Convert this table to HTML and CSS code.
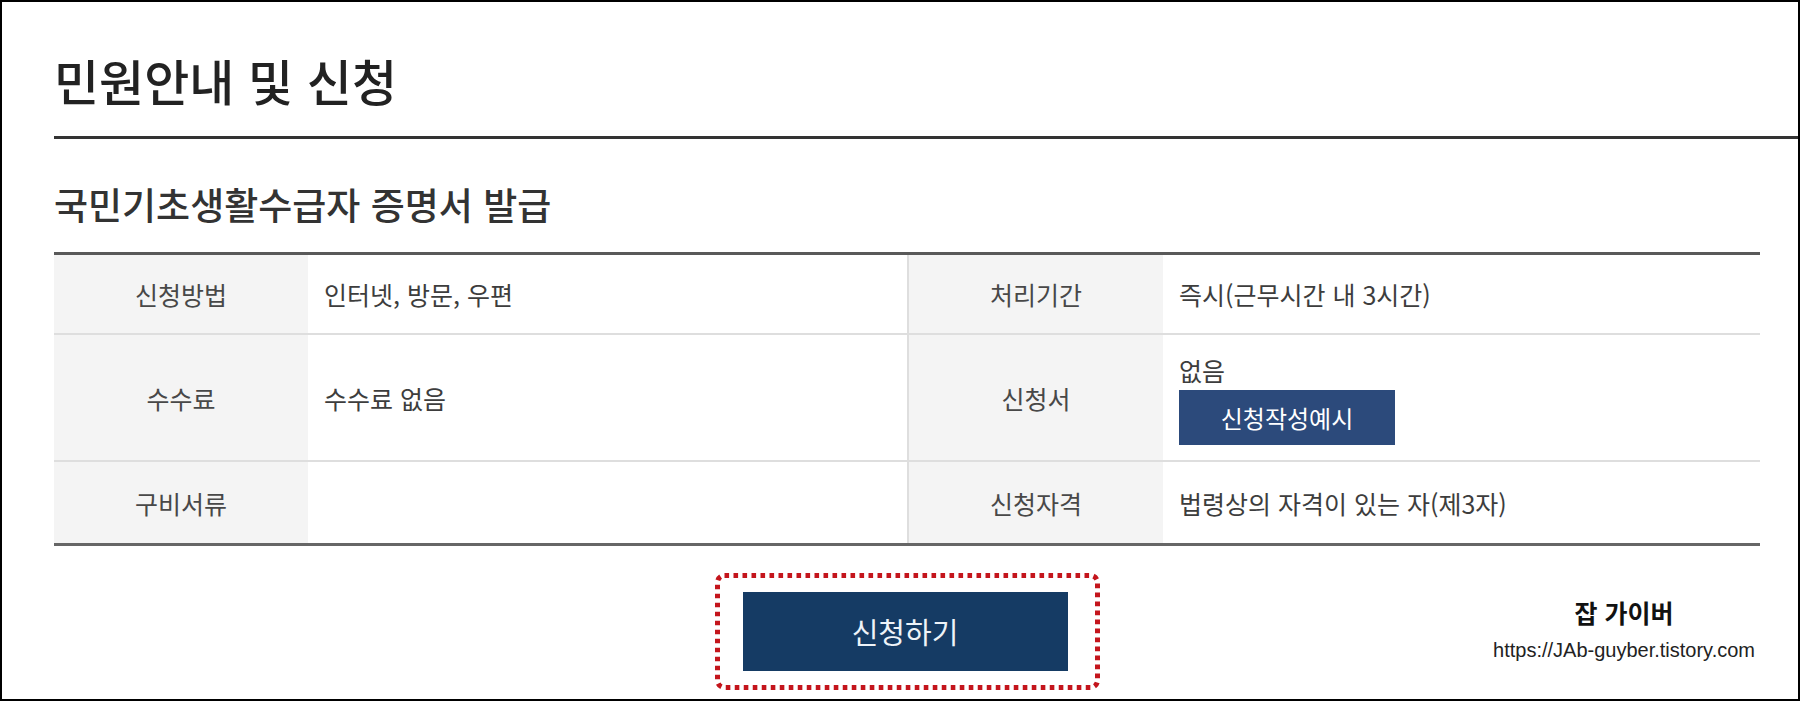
FILE: index.html
```html
<!DOCTYPE html>
<html lang="ko">
<head>
<meta charset="utf-8">
<title>민원안내 및 신청</title>
<link rel="stylesheet" href="styles.css">
</head>
<body>
<div class="frame">
  <h1 class="page-title">민원안내 및 신청</h1>
  <h2 class="sub-title">국민기초생활수급자 증명서 발급</h2>
  <div class="info">
    <div class="cell label">신청방법</div>
    <div class="cell value">인터넷, 방문, 우편</div>
    <div class="cell label sep">처리기간</div>
    <div class="cell value">즉시(근무시간 내 3시간)</div>

    <div class="cell label">수수료</div>
    <div class="cell value">수수료 없음</div>
    <div class="cell label sep">신청서</div>
    <div class="cell value stack">
      <span class="stack-text">없음</span>
      <button class="btn-example" type="button">신청작성예시</button>
    </div>

    <div class="cell label last">구비서류</div>
    <div class="cell value last"></div>
    <div class="cell label sep last">신청자격</div>
    <div class="cell value last">법령상의 자격이 있는 자(제3자)</div>
  </div>
  <div class="apply">
    <div class="highlight">
      <svg class="dots" width="385" height="117" viewBox="0 0 385 117" aria-hidden="true">
        <rect x="2.5" y="2.5" width="380" height="112" rx="7" ry="7" fill="none" stroke="#c4151c" stroke-width="5" stroke-dasharray="4.6 4.4"/>
      </svg>
      <button class="btn-apply" type="button">신청하기</button>
    </div>
  </div>
  <div class="watermark">
    <div class="wm-name">잡 가이버</div>
    <div class="wm-url">https://JAb-guyber.tistory.com</div>
  </div>
</div>
</body>
</html>
```
FILE: styles.css
```css
html, body {
  margin: 0;
  padding: 0;
  background: #fff;
}

.frame {
  position: relative;
  width: 1800px;
  height: 701px;
  box-sizing: border-box;
  border: 2px solid #000;
  padding-left: 52px;
  overflow: hidden;
  background: #fff;
  font-family: "Noto Sans CJK KR", "Noto Sans", sans-serif;
  color: #333;
}

.page-title {
  margin: 0;
  padding-top: 47px;
  padding-bottom: 26px;
  font-size: 49px;
  line-height: 61px;
  font-weight: 500;
  letter-spacing: 0;
  color: #222;
  border-bottom: 3px solid #333;
}

.sub-title {
  margin: 40px 0 0;
  font-size: 37px;
  line-height: 50px;
  font-weight: 500;
  letter-spacing: 0;
  color: #333;
}

.info {
  margin: 23px 38px 0 0;
  display: grid;
  grid-template-columns: 254px 599px 256px 1fr;
  grid-template-rows: 80px 127px 81px;
  border-top: 3px solid #595959;
  border-bottom: 3px solid #666;
}

.cell {
  box-sizing: border-box;
  display: flex;
  align-items: center;
  border-bottom: 2px solid #dedede;
  font-size: 25px;
  line-height: 30px;
  color: #3d3d3d;
}

.cell.last {
  border-bottom: 0;
}

.label {
  justify-content: center;
  background: #f4f4f4;
  color: #484848;
}

.label.sep {
  border-left: 2px solid #dedede;
}

.value {
  padding-left: 16px;
}

.stack {
  flex-direction: column;
  align-items: flex-start;
  justify-content: flex-start;
  padding-top: 20px;
}

.stack-text {
  display: block;
  line-height: 30px;
}

.btn-example {
  margin-top: 5px;
  width: 216px;
  height: 55px;
  border: 0;
  padding: 0;
  background: #2c4a7b;
  color: #fff;
  font-family: inherit;
  font-size: 24px;
  line-height: 55px;
}

.apply {
  display: flex;
  justify-content: center;
  margin: 27px 38px 0 0;
}

.highlight {
  position: relative;
  width: 385px;
  height: 117px;
  box-sizing: border-box;
  padding: 19px 32px 19px 28px;
}

.dots {
  position: absolute;
  left: 0;
  top: 0;
}

.btn-apply {
  display: block;
  width: 325px;
  height: 79px;
  border: 0;
  padding: 0;
  background: #153b64;
  color: #eef3f8;
  font-family: inherit;
  font-size: 29px;
  line-height: 79px;
}

.watermark {
  position: absolute;
  right: 38px;
  top: 595px;
  width: 272px;
  text-align: center;
}

.wm-name {
  font-size: 25px;
  line-height: 31px;
  font-weight: 700;
  color: #111;
}

.wm-url {
  margin-top: 9px;
  font-family: "Liberation Sans", Arial, sans-serif;
  font-size: 20px;
  line-height: 26px;
  color: #222;
}
```
